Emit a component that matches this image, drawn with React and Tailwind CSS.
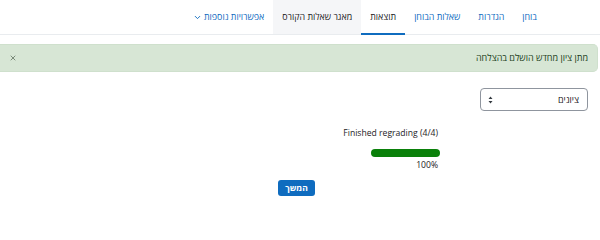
import { ChevronDown, X } from 'lucide-react'

// Quiz results page after a regrade, RTL (Hebrew) Moodle layout.
const TABS = [
  { label: 'בוחן' },
  { label: 'הגדרות' },
  { label: 'שאלות הבוחן' },
  { label: 'תוצאות', active: true },
  { label: 'מאגר שאלות הקורס', hover: true },
  { label: 'אפשרויות נוספות', menu: true },
]

export default function App() {
  return (
    <div
      dir="rtl"
      className="w-[600px] h-[207px] overflow-hidden bg-white text-[#1d2125]"
      style={{ fontFamily: '"Open Sans", "Liberation Sans", sans-serif' }}
    >
      {/* secondary navigation */}
      <nav className="flex h-[35px] border-b border-[#e9ecef] pr-[54px]">
        {TABS.map((t) => (
          <div
            key={t.label}
            className={
              'relative flex items-center px-[9px] text-[8.9px] ' +
              (t.active ? 'text-[#1d2125] ' : t.hover ? 'bg-[#f5f6f8] text-[#1d2125] ' : 'text-[#0f6cbf] ')
            }
          >
            <span>{t.label}</span>
            {t.menu && <ChevronDown className="mr-[2px] h-[9px] w-[9px]" strokeWidth={2.5} />}
            {t.active && <div className="absolute bottom-[-1px] left-0 right-0 h-[2px] bg-[#0f6cbf]" />}
          </div>
        ))}
      </nav>

      {/* success alert */}
      <div className="mt-[9px] pr-[2px]">
        <div className="flex h-[28px] items-center justify-between rounded-r-[5px] border border-l-0 border-[#cfe0cd] bg-[#d7e6d5] px-[9px] text-[9px] text-[#1c411b]">
          <span>מתן ציון מחדש הושלם בהצלחה</span>
          <X className="h-[8px] w-[8px] text-[#4a5a4a]" strokeWidth={2} />
        </div>
      </div>

      {/* view selector */}
      <div className="mt-[16px] flex pr-[12px]">
        <div className="flex h-[23px] w-[108px] items-center justify-between rounded-[4px] border border-[#8f959e] pr-[8px] pl-[7px] text-[9px]">
          <span>ציונים</span>
          <svg width="5" height="8" viewBox="0 0 5 8" className="text-[#343a40]">
            <path d="M2.5 0.5 L4.5 3 H0.5 Z M2.5 7.5 L4.5 5 H0.5 Z" fill="currentColor" />
          </svg>
        </div>
      </div>

      {/* regrade progress */}
      <div className="mt-[16px] flex pr-[162px]">
        <div className="flex flex-col items-end" dir="ltr">
          <div className="text-[8.6px] leading-[12px]">Finished regrading (4/4)</div>
          <div className="mt-[10px] -mr-[2px] h-[8px] w-[69px] rounded-full bg-[#0a800a]" />
          <div className="mt-[3px] text-[8.6px] leading-[11px]">100%</div>
        </div>
      </div>

      {/* continue */}
      <div className="mt-[9px] flex pr-[285px]">
        <button className="flex h-[16px] w-[37px] items-center justify-center rounded-[3px] bg-[#0f6cbf] text-[8.5px] font-bold text-white">
          המשך
        </button>
      </div>
    </div>
  )
}
